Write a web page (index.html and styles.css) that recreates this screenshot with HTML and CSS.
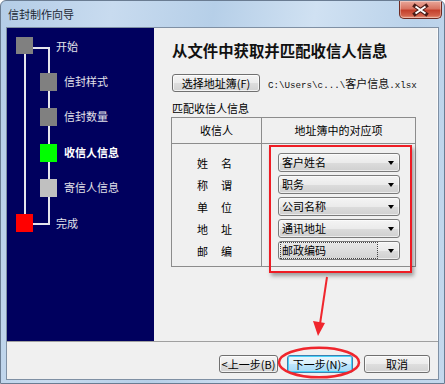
FILE: index.html
```html
<!DOCTYPE html>
<html lang="zh-CN">
<head>
  <meta charset="UTF-8">
  <title>信封制作向导</title>
  <link rel="stylesheet" href="styles.css">
</head>
<body>
  <div class="window">
    <!-- 标题栏 -->
    <div class="titlebar">
      <span class="title">信封制作向导</span>
      <div class="close-btn">
        <svg width="43" height="18">
          <path d="M16 5 L27 13 M27 5 L16 13" stroke="#4b1d17" stroke-width="4" stroke-linecap="square"/>
          <path d="M16.5 5.5 L26.5 12.5 M26.5 5.5 L16.5 12.5" stroke="#fff" stroke-width="2"/>
        </svg>
      </div>
    </div>

    <div class="client">
      <div class="main">
        <!-- 左侧步骤 -->
        <div class="steps">
          <svg width="147" height="313">
            <path d="M18 26 V186" stroke="#e4e4ec" stroke-width="2" fill="none"/>
            <path d="M26 20 H42 V196 H26" stroke="#e4e4ec" stroke-width="2" fill="none"/>
            <rect x="9" y="9" width="17" height="17" fill="#808080"/>
            <rect x="33" y="45" width="17" height="18" fill="#808080"/>
            <rect x="33" y="80" width="17" height="18" fill="#808080"/>
            <rect x="33" y="116" width="17" height="18" fill="#00ff00"/>
            <rect x="33" y="151" width="17" height="18" fill="#c0c0c0"/>
            <rect x="9" y="186" width="17" height="18" fill="#ff0000"/>
            <text class="step-text" x="49" y="23">开始</text>
            <text class="step-text" x="57" y="58">信封样式</text>
            <text class="step-text" x="57" y="93">信封数量</text>
            <text class="step-text current" x="57" y="129">收信人信息</text>
            <text class="step-text" x="57" y="164">寄信人信息</text>
            <text class="step-text" x="49" y="200">完成</text>
          </svg>
        </div>

        <!-- 右侧内容 -->
        <div class="content">
          <div class="heading">从文件中获取并匹配收信人信息</div>
          <div class="file-row">
            <button class="btn btn-pick">选择地址簿(F)</button>
            <span class="path"><span class="mono">C:\Users\c...\</span>客户信息<span class="mono">.xlsx</span></span>
          </div>
          <div class="group-label">匹配收信人信息</div>
          <div class="map-table">
            <div class="map-head">
              <div class="head-cell">收信人</div>
              <div class="head-cell">地址簿中的对应项</div>
            </div>
            <div class="map-body">
              <div class="fields">
                <div class="field"><span>姓</span><span>名</span></div>
                <div class="field"><span>称</span><span>谓</span></div>
                <div class="field"><span>单</span><span>位</span></div>
                <div class="field"><span>地</span><span>址</span></div>
                <div class="field"><span>邮</span><span>编</span></div>
              </div>
              <div class="combos">
                <div class="combo"><span class="combo-text">客户姓名</span><span class="combo-arrow"></span></div>
                <div class="combo"><span class="combo-text">职务</span><span class="combo-arrow"></span></div>
                <div class="combo"><span class="combo-text">公司名称</span><span class="combo-arrow"></span></div>
                <div class="combo"><span class="combo-text">通讯地址</span><span class="combo-arrow"></span></div>
                <div class="combo"><span class="combo-text focused">邮政编码</span><span class="combo-arrow"></span></div>
              </div>
            </div>
          </div>
        </div>
      </div>

      <div class="footer">
        <button class="btn btn-prev">&lt;上一步(B)</button>
        <button class="btn btn-next">下一步(N)&gt;</button>
        <button class="btn btn-cancel">取消</button>
      </div>
    </div>

    <!-- 标注 -->
    <div class="mark-box"></div>
    <svg class="marks" width="445" height="384">
      <path d="M327 277 L320 324" stroke="#f0262d" stroke-width="2" fill="none"/>
      <polygon points="313,321 325,323 318,336" fill="#f0262d"/>
      <ellipse cx="319" cy="362.5" rx="40" ry="14.8" stroke="#f0262d" stroke-width="2.5" fill="none"/>
    </svg>
  </div>
</body>
</html>
```

FILE: styles.css
```css
html, body {
  margin: 0;
  height: 100%;
}
body {
  font-family: "Noto Sans CJK SC", "Liberation Sans", sans-serif;
  font-size: 11px;
  color: #000;
  background: #fff;
}
.window {
  position: relative;
  width: 445px;
  height: 384px;
  box-sizing: border-box;
  border: 1px solid #6a7c92;
  border-radius: 6px 6px 0 0;
  background: linear-gradient(100deg, #b4cde7 0%, #c8dbef 22%, #b6cfe8 42%, #d0e1f2 62%, #bad2ea 82%, #c4d8ed 100%);
  display: flex;
  flex-direction: column;
  overflow: hidden;
}
.titlebar {
  height: 26px;
  display: flex;
  align-items: flex-start;
  flex-shrink: 0;
}
.title {
  padding-left: 7px;
  line-height: 26px;
  color: #1b2733;
}
.close-btn {
  margin-left: auto;
  margin-right: 2px;
  width: 43px;
  height: 18px;
  box-sizing: border-box;
  border: 1px solid #6e2a22;
  border-top: none;
  border-radius: 0 0 5px 5px;
  background: linear-gradient(#e9a89a 0%, #d87462 45%, #c4402c 55%, #d2614a 85%, #e89a80 100%);
  box-shadow: inset 0 0 0 1px rgba(255,255,255,0.35);
}
.close-btn svg {
  display: block;
  margin-left: -1px;
}
.client {
  flex: 1;
  margin: 0 5px 3px 5px;
  border: 1px solid #7f90a4;
  background: #f0f0f0;
  display: flex;
  flex-direction: column;
}
.main {
  height: 313px;
  display: flex;
  flex-shrink: 0;
}
.steps {
  width: 147px;
  background: #00005e;
}
.steps svg {
  display: block;
}
.step-text {
  font-family: "Noto Sans CJK SC", sans-serif;
  font-size: 11px;
  fill: #e2e2ea;
}
.step-text.current {
  font-weight: 700;
  fill: #fff;
}
.content {
  flex: 1;
  min-width: 0;
  padding: 12px 21px 0 17px;
  border-right: 1px solid #fafafa;
}
.heading {
  font-size: 15.4px;
  font-weight: 700;
  line-height: 20px;
  padding-left: 1px;
  color: #111;
}
.file-row {
  margin-top: 14px;
  height: 18px;
  display: flex;
  align-items: center;
  padding-left: 1px;
  white-space: nowrap;
}
.btn {
  box-sizing: border-box;
  height: 18px;
  padding: 0;
  border: 1px solid #707070;
  border-radius: 3px;
  background: linear-gradient(#f4f4f4 0%, #ececec 50%, #dedede 50%, #d2d2d2 100%);
  box-shadow: inset 0 0 0 1px rgba(255,255,255,0.7);
  font-family: "Noto Sans CJK SC", "Liberation Sans", sans-serif;
  font-size: 11px;
  line-height: 15px;
  color: #000;
  white-space: nowrap;
}
.btn-pick {
  width: 88px;
  flex-shrink: 0;
}
.path {
  margin-left: 8px;
  font-size: 11px;
  color: #111;
  white-space: nowrap;
  flex-shrink: 0;
}
.path .mono {
  font-family: "Liberation Mono", monospace;
  font-size: 9.2px;
}
.group-label {
  margin-top: 9px;
  line-height: 14px;
  padding-left: 1px;
}
.map-table {
  margin-top: 2px;
  border: 1px solid #8c8c8c;
}
.map-head,
.map-body {
  display: grid;
  grid-template-columns: 89px 1fr;
}
.map-head {
  height: 25px;
  border-bottom: 1px solid #8c8c8c;
}
.head-cell {
  line-height: 25px;
  text-align: center;
}
.head-cell + .head-cell,
.combos {
  border-left: 1px solid #8c8c8c;
}
.map-body {
  height: 122px;
}
.fields,
.combos {
  display: flex;
  flex-direction: column;
  gap: 3px;
  padding-top: 9px;
}
.field {
  height: 19px;
  display: flex;
  align-items: center;
  justify-content: center;
  gap: 13px;
  padding-right: 4px;
}
.combos {
  padding-left: 16px;
}
.combo {
  width: 122px;
  height: 19px;
  box-sizing: border-box;
  border: 1px solid #7a7a7a;
  border-radius: 3px;
  background: linear-gradient(#f4f4f4 0%, #ebebeb 50%, #dcdcdc 51%, #d0d0d0 100%);
  box-shadow: inset 0 0 0 1px rgba(255,255,255,0.6);
  display: flex;
  align-items: center;
  padding-left: 2px;
}
.combo-text {
  line-height: 15px;
  padding-left: 1px;
}
.combo-text.focused {
  flex: 1;
  margin-right: 11px;
  outline: 1px dotted #444;
  background: linear-gradient(#e6e6e6, #d4d4d4);
}
.combo-arrow {
  margin-left: auto;
  margin-right: 5px;
  width: 0;
  height: 0;
  border-top: 4px solid #000;
  border-left: 3.5px solid transparent;
  border-right: 3.5px solid transparent;
}
.footer {
  flex: 1;
  border-top: 1px solid #a0a0a0;
  display: flex;
  justify-content: flex-end;
  align-items: flex-start;
  padding: 13px 8px 0 0;
}
.btn-prev {
  width: 59px;
}
.btn-next {
  width: 66px;
  margin-left: 9px;
  border-color: #3c7fb1;
  background: linear-gradient(#eaf6fd 0%, #d9f0fc 50%, #bee6fd 50%, #a7d9f5 100%);
  box-shadow: inset 0 0 0 1px #48d2f8;
}
.btn-cancel {
  width: 66px;
  margin-left: 11px;
}
.mark-box {
  position: absolute;
  left: 268px;
  top: 144px;
  width: 143px;
  height: 128px;
  box-sizing: border-box;
  border: 2px solid #ee1c24;
  box-shadow: 2px 3px 4px rgba(0,0,0,0.35);
}
.marks {
  position: absolute;
  left: -1px;
  top: -1px;
  pointer-events: none;
}
```
